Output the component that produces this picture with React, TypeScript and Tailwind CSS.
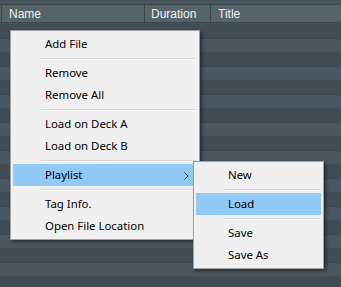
import React from "react";

const font = { fontFamily: '"Noto Sans", "Open Sans", sans-serif' };

function Item({ label, hl, arrow, pl = "pl-[32px]" }: { label: string; hl?: boolean; arrow?: boolean; pl?: string }) {
  return (
    <div className={`relative h-[22px] flex items-center ${pl} text-[11.4px] text-black ${hl ? "bg-[#91c9f7]" : ""}`}>
      <span className="leading-none">{label}</span>
      {arrow && (
        <svg className="absolute right-[8px] top-[8px]" width="5" height="8" viewBox="0 0 5 8">
          <path d="M0.5 0.5 L4 4 L0.5 7.5" fill="none" stroke="#333" strokeWidth="1" />
        </svg>
      )}
    </div>
  );
}

function Sep({ ml = "ml-[28px]" }: { ml?: string }) {
  return (
    <div className="h-[7px] flex flex-col pt-[3px]">
      <div className={`${ml} mr-[1px] h-[1px] bg-[#d7d7d7]`} />
      <div className={`${ml} mr-[1px] h-[1px] bg-[#fafafa]`} />
    </div>
  );
}

export default function App() {
  const rows = Array.from({ length: 19 });
  return (
    <div className="relative w-[341px] h-[287px] overflow-hidden bg-[#424c54]" style={font}>
      <div className="h-[4px] bg-[#4a565d]" />
      <div className="h-[19px] flex bg-[#56646a] border-y border-[#3b454b] pl-[1px]" style={{ fontFamily: '"Liberation Sans", Arial, sans-serif' }}>
        <div className="w-[144px] border-x border-[#3b454b] flex items-center pl-[7px] text-[12px] text-[#f0f0f0]">Name</div>
        <div className="w-[66px] border-r border-[#3b454b] flex items-center pl-[6px] text-[12px] text-[#f0f0f0]">Duration</div>
        <div className="flex-1 flex items-center pl-[7px] text-[12px] text-[#f0f0f0]">Title</div>
      </div>
      <div className="h-[1px] bg-[#46515a]" />
      <div className="flex flex-col">
        {rows.map((_, i) =>
          i % 2 === 0 ? (
            <div key={i} className="h-[14px] bg-[#424c54]" />
          ) : (
            <div key={i} className="h-[14px] bg-[#4a5660] border-t border-[#3a434a]" />
          )
        )}
      </div>

      <div className="absolute left-[10px] top-[30px] w-[190px] h-[210px] bg-[#f0f0f0] border border-[#a0a0a0] p-[2px] shadow-[2px_2px_3px_rgba(0,0,0,0.45)]">
        <Item label="Add File" />
        <Sep />
        <Item label="Remove" />
        <Item label="Remove All" />
        <Sep />
        <Item label="Load on Deck A" />
        <Item label="Load on Deck B" />
        <Sep />
        <Item label="Playlist" hl arrow />
        <Sep />
        <Item label="Tag Info." />
        <Item label="Open File Location" />
      </div>

      <div className="absolute left-[193px] top-[161px] w-[131px] h-[108px] bg-[#f0f0f0] border border-[#a0a0a0] p-[2px] shadow-[2px_2px_3px_rgba(0,0,0,0.45)]">
        <Item label="New" />
        <Sep ml="ml-[27px]" />
        <Item label="Load" hl />
        <Sep ml="ml-[27px]" />
        <Item label="Save" />
        <Item label="Save As" />
      </div>
    </div>
  );
}
